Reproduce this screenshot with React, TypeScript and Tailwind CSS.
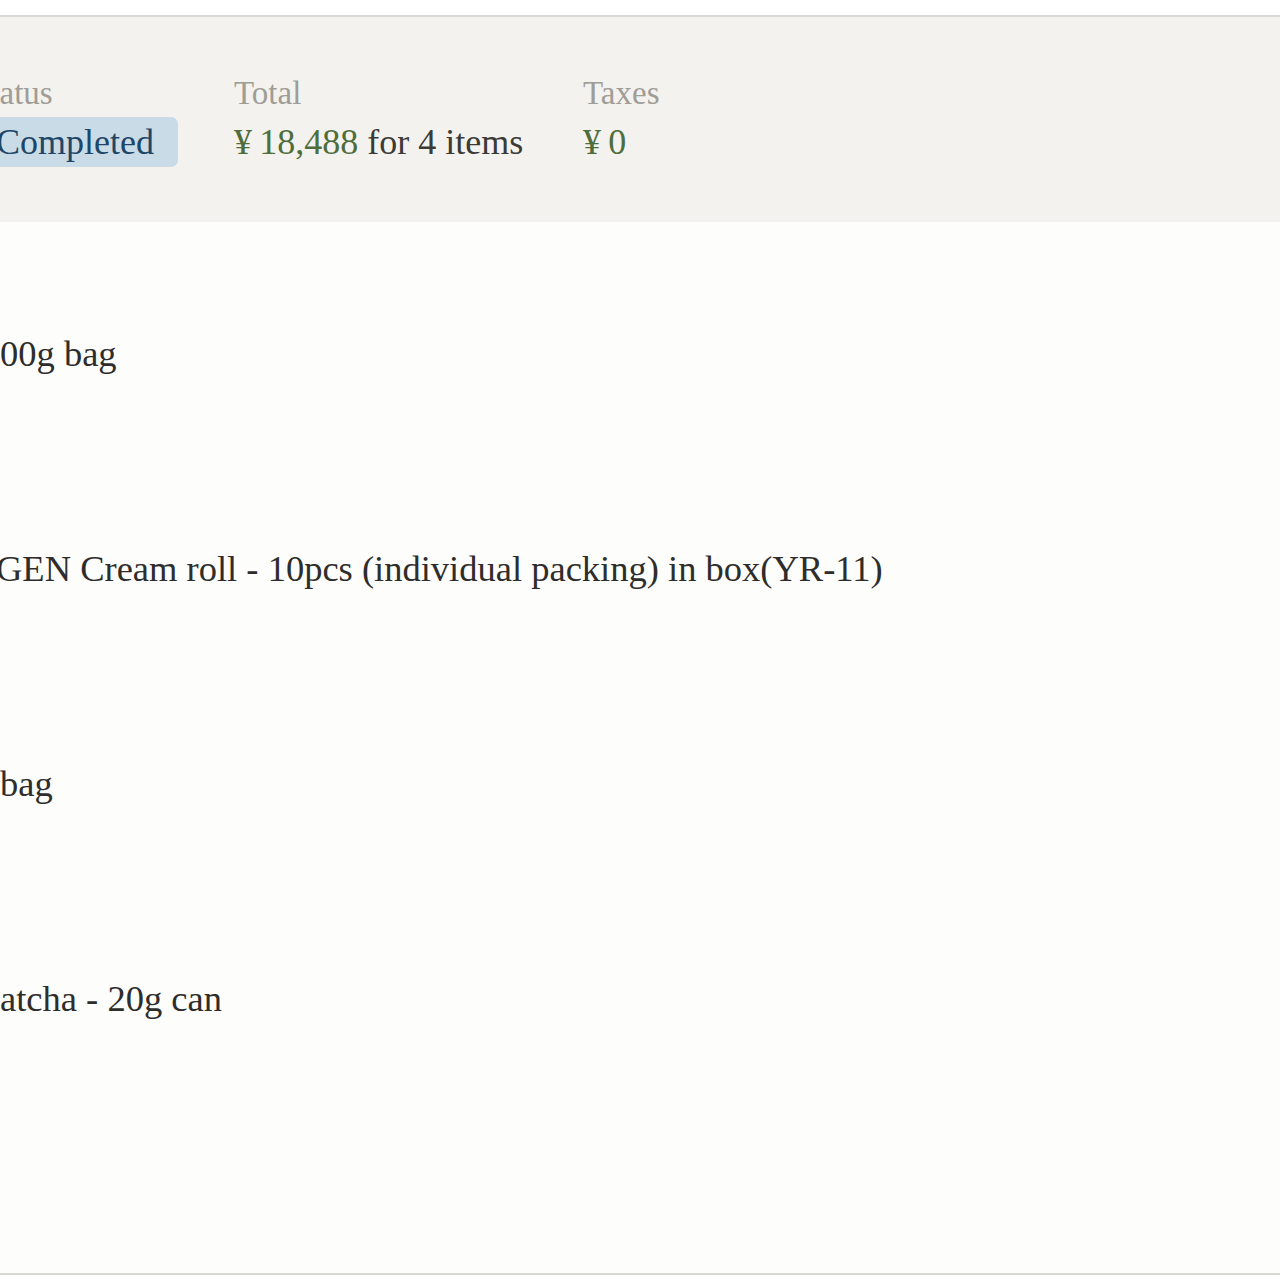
import React from 'react';

const serif = { fontFamily: '"Liberation Serif", "Times New Roman", serif' };

type Item = { hidden: string; shown: string };

const items: Item[] = [
  { hidden: 'Hojicha - 2', shown: '00g bag' },
  { hidden: 'MORI', shown: 'GEN Cream roll - 10pcs (individual packing) in box(YR-11)' },
  { hidden: 'Genmaicha - 200g ', shown: 'bag' },
  { hidden: 'Uji M', shown: 'atcha - 20g can' },
];

// the page is cropped on the left, so each name's start sits just off the edge
const ItemRow: React.FC<{ item: Item; nudge: string }> = ({ item, nudge }) => (
  <div className="h-[215px] flex items-center">
    <p className={`whitespace-nowrap text-[36.5px] leading-[43px] text-[#2e2d2b] ${nudge}`}>
      <span className="inline-block w-[320px] -ml-[320px] text-right overflow-hidden align-top">{item.hidden}</span>
      {item.shown}
    </p>
  </div>
);

const App: React.FC = () => {
  return (
    <div className="w-[1280px] h-[1280px] overflow-hidden bg-white" style={serif}>
      <div className="h-[15px]" />
      <div className="border-t-2 border-b-2 border-[#d9d8d5]">
        <div className="bg-[#f3f2ee] pt-[55px] pb-[55px] flex">
          <div className="w-[262px] -ml-[28px] shrink-0">
            <div className="text-[33px] leading-[43px] text-[#a09d97] mb-[2px] whitespace-nowrap">Status</div>
            <span className="inline-block bg-[#c9dbe6] rounded-[7px] pl-[24px] pr-[24px] pt-[4px] pb-[3px] text-[36px] leading-[43px] text-[#1d4668]">
              Completed
            </span>
          </div>
          <div className="w-[349px] shrink-0">
            <div className="text-[33px] leading-[43px] text-[#a09d97] mb-[2px]">Total</div>
            <div className="pt-[4px] text-[36px] leading-[43px] whitespace-nowrap">
              <span className="text-[#4e6d3b]">¥{'\u2009'}18,488</span>
              <span className="text-[#3b3a37]"> for 4 items</span>
            </div>
          </div>
          <div>
            <div className="text-[33px] leading-[43px] text-[#a09d97] mb-[2px]">Taxes</div>
            <div className="pt-[4px] text-[36px] leading-[43px] text-[#4e6d3b]">¥{'\u2009'}0</div>
          </div>
        </div>
        <div className="bg-[#fdfdfb] h-[1051px] pt-[24px]">
          <ItemRow item={items[0]} nudge="ml-0" />
          <ItemRow item={items[1]} nudge="-ml-[4px]" />
          <ItemRow item={items[2]} nudge="ml-0" />
          <ItemRow item={items[3]} nudge="ml-0" />
        </div>
      </div>
    </div>
  );
};

export default App;
